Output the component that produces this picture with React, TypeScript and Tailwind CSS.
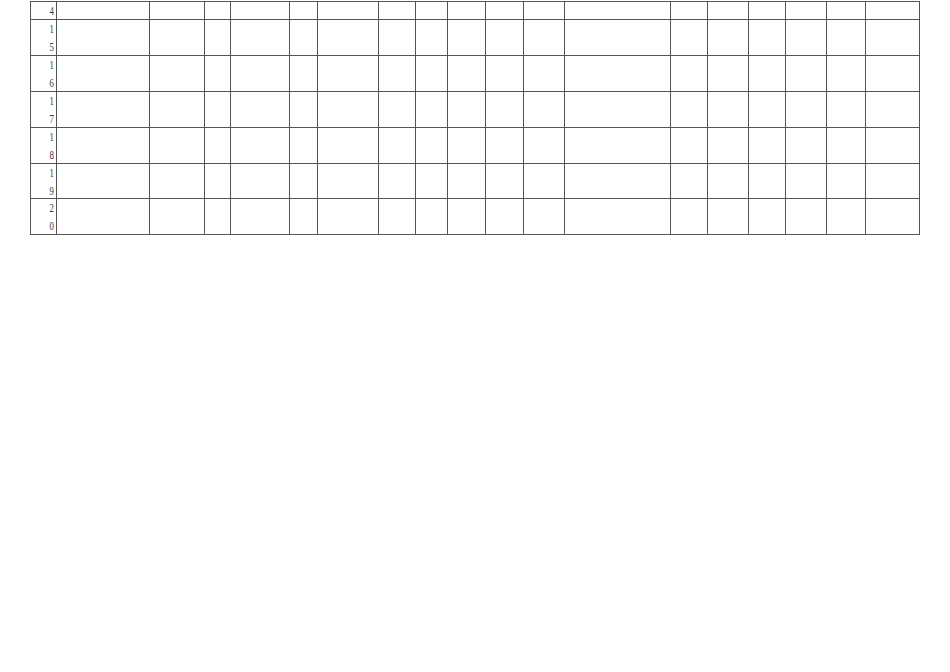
const widths = [26, 93, 55, 26, 59, 28, 61, 37, 32, 38, 38, 41, 106, 37, 41, 37, 41, 39, 54];

const rows = [
  { n: '4', h: 'h-[18px]' },
  { n: '15', h: 'h-[36px]' },
  { n: '16', h: 'h-[36px]' },
  { n: '17', h: 'h-[36px]' },
  { n: '18', h: 'h-[36px]' },
  { n: '19', h: 'h-[35px]' },
  { n: '20', h: 'h-[36px]' },
];

export default function App() {
  return (
    <div className="w-[950px] h-[672px] bg-white pt-px pl-[30px] font-['Liberation_Serif',serif] text-[#3a3a3a]">
      <div className="w-[890px] border-l border-t border-[#555]">
        {rows.map(r => (
          <div key={r.n} className={`flex ${r.h}`}>
            {widths.map((w, i) => (
              <div key={i} style={{ width: w }} className="shrink-0 border-r border-b border-[#555]">
                {i === 0 && (
                  <div className="pr-[3px] pt-px text-right text-[12.5px] leading-[17.5px] scale-x-70 origin-right">
                    {r.n.split('').map((c, j) => <div key={j}>{c}</div>)}
                  </div>
                )}
              </div>
            ))}
          </div>
        ))}
      </div>
    </div>
  );
}
